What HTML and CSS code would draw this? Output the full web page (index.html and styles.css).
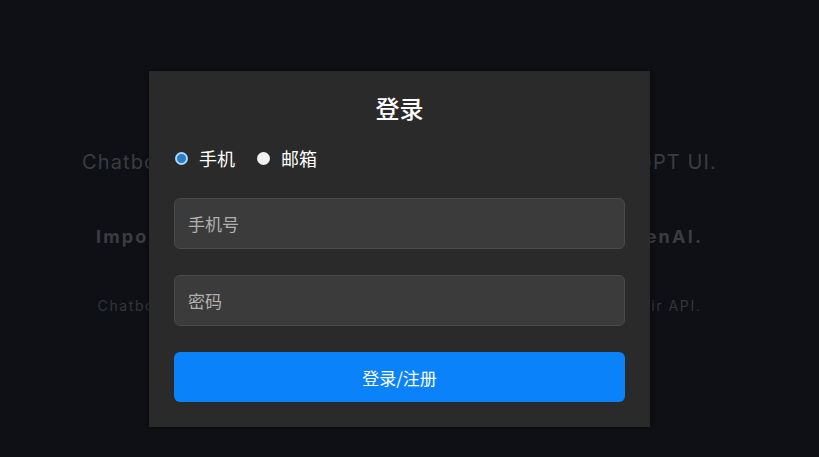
FILE: index.html
```html
<!DOCTYPE html>
<html lang="zh-CN">
<head>
<meta charset="UTF-8">
<title>Chatbot UI</title>
<link rel="stylesheet" href="styles.css">
</head>
<body>

<div class="page">
  <p class="intro">Chatbot UI is an open source clone of OpenAI's ChatGPT UI.</p>
  <p class="notice">Important: Chatbot UI is 100% unaffiliated with OpenAI.</p>
  <p class="small">Chatbot UI allows you to plug in your API key to use this UI with their API.</p>
</div>

<div class="login">
  <h2 class="login-title">登录</h2>

  <div class="modes">
    <label class="mode"><input type="radio" name="mode" checked><span>手机</span></label>
    <label class="mode"><input type="radio" name="mode"><span>邮箱</span></label>
  </div>

  <input class="field" type="text" placeholder="手机号">
  <input class="field field-pass" type="password" placeholder="密码">

  <button class="submit">登录/注册</button>
</div>

</body>
</html>
```

FILE: styles.css
```css
  body { margin: 0; background-color: #0e1015; font-family: Inter, "Noto Sans CJK SC", sans-serif; height: 457px; overflow: hidden; }
  .page { display: flex; flex-direction: column; align-items: center; padding: 148px 20px 0 0; color: #3b3c42; }
  .intro { margin: 0; font-size: 20px; line-height: 28px; letter-spacing: 1.1px; }
  .notice { margin: 47px 0 0; font-size: 18px; line-height: 28px; font-weight: 700; letter-spacing: 2.2px; }
  .small { margin: 45px 0 0; font-size: 14px; line-height: 20px; color: #34353b; letter-spacing: 1.6px; }

  /* 登录弹窗 */
  .login {
  position: absolute; /* 背景文字の上に重ねる */
  left: 149px;
  top: 71px;
  width: 501px;
  box-sizing: border-box;
  padding: 20px 25px 25px;
  display: flex;
  flex-direction: column;
  background-color: #2a2a2a;
  box-shadow: 0 0 4px rgba(0, 0, 0, 0.6);
  font-family: "Noto Sans CJK SC", sans-serif;
  color: #ffffff;
}
  .login-title { margin: 0; text-align: center; font-size: 24px; line-height: 34px; font-weight: 500; }
  .modes { display: flex; align-items: center; gap: 21px; margin-top: 21px; height: 24px; }
  .mode { display: flex; align-items: center; gap: 11px; font-size: 18px; }
  .mode input {
  appearance: none;
  margin: 0 0 0 1px;
  width: 13px;
  height: 13px;
  border-radius: 50%;
  background-color: #f2f2f2;
}
  .mode input:checked { background-color: #2b7cc6; border: 2px solid #a9d6f7; box-sizing: border-box; }
  .field {
  margin-top: 28px;
  height: 51px;
  box-sizing: border-box;
  padding: 0 13px;
  border: 1px solid #4a4a4a;
  border-radius: 6px;
  background-color: #3b3b3b;
  color: #ffffff;
  font-family: "Noto Sans CJK SC", sans-serif;
  font-size: 17px;
  outline: none;
}
  .field::placeholder { color: #b0b0b0; }
  .field-pass { margin-top: 26px; }
  .submit {
  margin-top: 26px;
  height: 50px;
  border: none;
  border-radius: 6px;
  background-color: #0a82fa;
  color: #ffffff;
  font-family: "Noto Sans CJK SC", sans-serif;
  font-size: 17px;
}
```
